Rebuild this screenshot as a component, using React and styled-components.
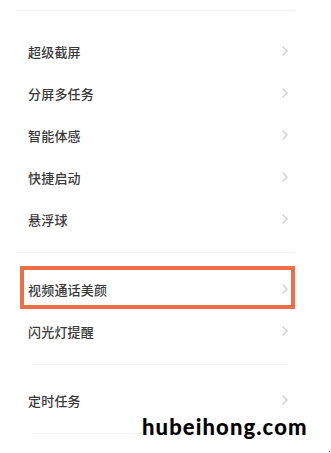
import React from "react";
import styled, { createGlobalStyle } from "styled-components";

const Global = createGlobalStyle`
  html, body { margin: 0; padding: 0; background: #ffffff; }
  body { font-family: "Noto Sans CJK SC", "Noto Sans", sans-serif; }
`;

const Page = styled.div`
  position: relative;
  width: 331px;
  height: 453px;
  overflow: hidden;
  background: #ffffff;
  padding-top: 10px;
  box-sizing: border-box;
`;

const Divider = styled.div`
  height: 1px;
  background: #f3f3f3;
  margin: 0 ${(p) => p.$right}px 0 ${(p) => p.$left}px;
`;

const Section = styled.div`
  display: flex;
  flex-direction: column;
  padding: ${(p) => p.$top}px 0 12px;
`;

const Row = styled.div`
  position: relative;
  display: flex;
  align-items: center;
  justify-content: space-between;
  height: 42px;
  padding: 0 43px 0 28px;
`;

const Label = styled.span`
  font-family: "Noto Sans CJK SC", sans-serif;
  font-size: 13px;
  font-weight: 500;
  color: #3a3a3a;
  letter-spacing: 0.2px;
`;

const Highlight = styled.div`
  position: absolute;
  left: 20px;
  right: 36px;
  top: -2px;
  bottom: 1px;
  border: 4px solid #ee6f47;
  pointer-events: none;
`;

const Watermark = styled.div`
  position: absolute;
  left: 142px;
  top: 416px;
  font-family: "Lato", sans-serif;
  font-weight: 900;
  font-size: 22px;
  letter-spacing: 1.1px;
  color: #000000;
  line-height: 1;
`;

const Dot = styled.div`
  position: absolute;
  right: 1px;
  bottom: 1px;
  width: 1px;
  height: 1px;
  background: #555;
`;

const Chevron = () => (
  <svg width="6" height="10" viewBox="0 0 6 10" fill="none">
    <path d="M1 1l4 4-4 4" stroke="#cdcdcd" strokeWidth="1.3" strokeLinecap="round" strokeLinejoin="round" />
  </svg>
);

const Item = ({ label, highlight }) => (
  <Row>
    <Label>{label}</Label>
    <Chevron />
    {highlight && <Highlight />}
  </Row>
);

export default function App() {
  return (
    <>
      <Global />
      <Page>
        <Divider $left={16} $right={36} />
        <Section $top={19}>
          <Item label="超级截屏" />
          <Item label="分屏多任务" />
          <Item label="智能体感" />
          <Item label="快捷启动" />
          <Item label="悬浮球" />
        </Section>
        <Divider $left={16} $right={36} />
        <Section $top={15}>
          <Item label="视频通话美颜" highlight />
          <Item label="闪光灯提醒" />
        </Section>
        <Divider $left={32} $right={43} />
        <Section $top={14}>
          <Item label="定时任务" />
        </Section>
        <Divider $left={32} $right={43} />
        <Watermark>hubeihong.com</Watermark>
        <Dot />
      </Page>
    </>
  );
}
